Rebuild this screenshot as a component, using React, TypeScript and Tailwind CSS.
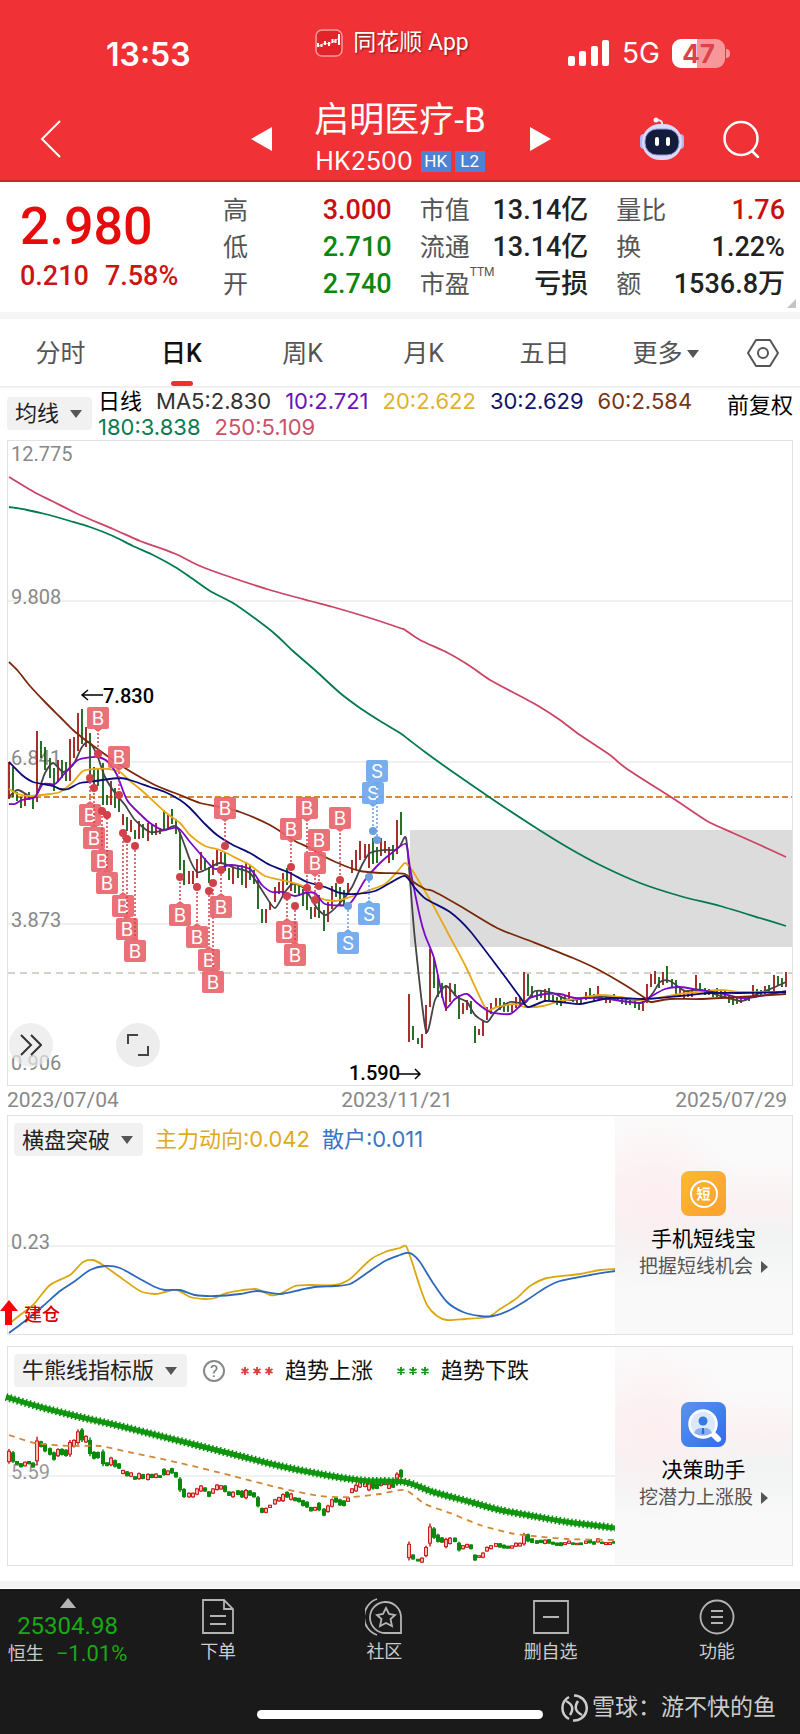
import type { ReactNode } from 'react';

type Point = [number, number];
type Candle = [number, number, number, 'r' | 'g'];

const MA250: Point[] = [[9,477],[34,492],[52,501],[80,515],[113,529],[140,541],[160,548],[178,555],[200,566],[233,578],[270,590],[310,601],[333,607],[370,618],[400,628],[405,630],[420,640],[448,653],[470,666],[490,680],[520,696],[540,707],[560,720],[580,735],[610,755],[627,769],[677,801],[707,821],[733,833],[760,845],[786,857]];
const MA180: Point[] = [[9,507],[27,510],[45,514],[70,521],[90,527],[113,536],[133,546],[155,556],[175,567],[190,577],[210,591],[233,603],[253,617],[275,634],[293,651],[317,672],[340,693],[360,708],[380,721],[400,733],[408,739],[425,752],[450,770],[495,801],[533,826],[567,847],[600,865],[640,883],[680,896],[720,906],[760,918],[786,926]];
const MA60: Point[] = [[9,662],[18,671],[30,686],[45,702],[60,717],[73,730],[88,742],[113,760],[133,773],[157,786],[180,795],[200,803],[220,807],[240,812],[270,825],[295,841],[310,848],[325,857],[345,866],[360,871],[380,873],[405,874],[412,881],[425,889],[433,891],[460,906],[497,928],[533,942],[573,958],[597,969],[625,985],[645,998],[651,1002],[670,999],[700,999],[740,997],[786,994]];
const MA30: Point[] = [[9,762],[22,775],[33,782],[53,786],[60,789],[68,789],[80,783],[95,781],[120,778],[133,781],[150,787],[165,792],[180,800],[190,808],[205,824],[217,835],[233,845],[250,853],[270,865],[290,873],[307,882],[325,887],[340,893],[355,894],[375,891],[390,883],[405,876],[415,888],[426,899],[450,912],[470,931],[500,970],[520,997],[528,1007],[545,1001],[560,1002],[580,1004],[610,998],[645,999],[680,996],[710,993],[740,993],[786,992]];
const MA20: Point[] = [[9,789],[18,794],[30,796],[50,794],[60,792],[73,782],[83,771],[95,769],[108,769],[120,772],[130,781],[140,789],[150,798],[165,812],[180,823],[190,835],[205,846],[220,850],[240,860],[250,865],[265,876],[290,882],[305,887],[320,898],[335,901],[350,897],[370,890],[385,884],[397,872],[405,863],[412,870],[420,883],[433,905],[450,937],[465,965],[478,993],[487,1010],[497,1007],[513,1004],[525,1007],[543,1006],[560,1001],[580,998],[600,995],[620,997],[645,1000],[680,994],[720,990],[740,992],[786,992]];
const MA10: Point[] = [[9,804],[15,804],[22,800],[35,797],[43,784],[55,784],[65,773],[78,760],[97,757],[108,762],[117,775],[127,800],[140,814],[150,823],[163,830],[178,828],[190,842],[203,857],[215,869],[230,865],[250,869],[262,885],[272,892],[283,892],[295,896],[305,893],[315,893],[325,904],[347,905],[355,897],[365,880],[380,863],[393,852],[406,844],[410,868],[420,917],[425,935],[434,958],[441,990],[446,1008],[455,999],[467,994],[477,1003],[490,1012],[510,1014],[520,1006],[530,998],[545,994],[560,994],[575,998],[600,998],[640,1003],[650,997],[665,989],[680,987],[700,990],[720,993],[740,998],[755,997],[786,991]];
const MA5: Point[] = [[9,797],[18,790],[35,797],[45,773],[53,763],[63,772],[73,765],[82,747],[89,742],[97,755],[105,777],[115,793],[125,805],[135,820],[150,832],[165,830],[177,827],[190,860],[197,872],[205,870],[220,863],[235,868],[250,873],[265,895],[275,908],[285,892],[293,884],[305,889],[317,908],[326,915],[340,903],[352,887],[362,865],[370,853],[385,850],[395,850],[400,846],[406,838],[410,880],[415,940],[426,1031],[435,1000],[446,986],[457,997],[467,1002],[475,1015],[487,1022],[495,1012],[510,1002],[525,1003],[535,991],[553,993],[570,1000],[600,996],[645,1000],[660,982],[670,981],[685,991],[700,990],[740,1001],[755,995],[775,987],[786,982]];

const averages: { points: Point[]; color: string }[] = [
    { points: MA5, color: '#444444' },
    { points: MA20, color: '#e8a818' },
    { points: MA10, color: '#7a08c8' },
    { points: MA30, color: '#0a0a78' },
    { points: MA60, color: '#782808' },
    { points: MA180, color: '#007850' },
    { points: MA250, color: '#cc4464' },
];

// x, high, low, direction
const candles: Candle[] = [
    [9,762,799,'r'],[13,767,797,'g'],[17,792,801,'g'],[21,797,808,'g'],[25,793,806,'r'],[29,792,800,'g'],[33,795,809,'g'],[37,731,802,'r'],[41,741,758,'g'],[45,747,770,'g'],
    [50,758,778,'g'],[54,768,791,'g'],[58,760,782,'r'],[62,760,778,'g'],[66,762,781,'g'],[70,739,781,'r'],[74,737,758,'r'],[78,713,751,'r'],[82,709,744,'g'],[86,727,747,'r'],
    [90,733,780,'g'],[94,767,788,'g'],[98,768,786,'g'],[103,763,805,'g'],[107,795,805,'g'],[111,781,805,'r'],[115,788,808,'g'],[119,797,812,'g'],[123,814,825,'r'],[127,817,831,'g'],
    [131,820,832,'r'],[135,830,839,'g'],[139,821,839,'r'],[143,824,838,'g'],[148,823,841,'r'],[152,824,835,'g'],[156,823,835,'r'],[160,828,834,'g'],[164,810,829,'g'],[168,815,828,'r'],
    [172,809,824,'g'],[176,819,834,'g'],[180,832,870,'g'],[184,860,885,'g'],[189,871,884,'r'],[193,871,884,'r'],[197,859,878,'r'],[201,852,870,'r'],[205,858,869,'g'],[209,867,883,'g'],
    [213,860,875,'r'],[217,850,866,'r'],[221,852,864,'r'],[225,852,871,'g'],[229,868,880,'g'],[233,868,884,'r'],[238,865,878,'g'],[242,865,885,'g'],[246,862,888,'r'],[250,865,880,'g'],
    [254,870,884,'g'],[258,880,909,'g'],[262,909,923,'g'],[266,909,923,'r'],[270,902,910,'r'],[275,887,902,'r'],[279,882,894,'r'],[283,873,895,'r'],[287,868,885,'g'],[291,872,891,'r'],
    [295,883,893,'g'],[299,884,896,'g'],[303,889,906,'g'],[307,893,910,'g'],[311,907,919,'g'],[315,907,917,'r'],[319,895,918,'g'],[324,910,931,'g'],[328,902,922,'r'],[332,886,909,'r'],
    [336,883,897,'g'],[340,887,905,'g'],[344,890,906,'g'],[348,883,895,'r'],[352,860,873,'r'],[356,850,870,'r'],[360,841,860,'r'],[365,844,858,'r'],[369,844,868,'r'],[373,838,864,'g'],
    [377,847,863,'g'],[381,838,856,'r'],[385,841,853,'r'],[389,847,863,'r'],[393,845,860,'g'],[397,820,854,'r'],[401,812,835,'g'],[409,994,1042,'r'],[413,1026,1040,'g'],[418,1038,1044,'g'],
    [422,1034,1048,'r'],[426,1005,1034,'r'],[430,949,1007,'r'],[434,958,988,'g'],[438,975,997,'g'],[442,983,998,'g'],[446,985,1011,'r'],[450,983,1002,'r'],[455,984,996,'g'],[459,995,1019,'g'],
    [463,1003,1014,'r'],[467,1000,1010,'r'],[471,1001,1014,'g'],[475,1026,1043,'g'],[479,1029,1035,'r'],[483,1021,1036,'r'],[487,1007,1020,'r'],[491,1003,1014,'r'],[496,998,1008,'r'],[500,998,1010,'g'],
    [504,1002,1012,'g'],[508,1005,1012,'g'],[512,1004,1012,'r'],[516,997,1008,'r'],[520,997,1007,'r'],[524,972,1005,'r'],[528,974,996,'g'],[532,986,998,'g'],[537,991,1000,'g'],[541,990,998,'g'],
    [545,989,1001,'r'],[549,988,1000,'g'],[553,995,1002,'g'],[557,997,1005,'g'],[561,996,1006,'g'],[565,996,1003,'r'],[569,992,1000,'r'],[573,997,1002,'g'],[577,998,1003,'r'],[581,997,1003,'g'],
    [586,992,1000,'r'],[590,988,999,'g'],[594,994,1002,'g'],[598,986,997,'r'],[602,995,1000,'g'],[606,996,1003,'r'],[610,996,1003,'r'],[614,994,999,'g'],[618,997,1001,'g'],[622,998,1004,'g'],
    [626,998,1005,'g'],[630,998,1005,'g'],[635,1001,1008,'g'],[639,1003,1010,'g'],[643,998,1011,'r'],[647,984,1003,'r'],[651,974,987,'r'],[655,971,984,'r'],[659,977,988,'g'],[663,972,985,'r'],
    [667,966,983,'g'],[672,979,988,'g'],[676,980,995,'g'],[680,988,997,'r'],[684,991,998,'r'],[688,990,997,'r'],[692,989,997,'r'],[696,975,990,'r'],[700,983,992,'g'],[705,988,995,'g'],
    [709,989,995,'r'],[713,990,997,'g'],[717,988,997,'g'],[721,990,997,'g'],[725,991,997,'r'],[729,996,1003,'g'],[733,998,1005,'g'],[737,998,1004,'g'],[741,998,1003,'r'],[745,997,1001,'r'],
    [749,996,1001,'g'],[753,985,997,'r'],[757,989,996,'g'],[761,990,995,'g'],[765,986,994,'r'],[769,985,992,'g'],[774,975,991,'r'],[778,976,986,'g'],[782,978,987,'g'],[786,972,987,'r'],
];

// x of the trade, y of the label, y of the dot
const buys: [number, number, number][] = [
    [98,718,754],[119,757,795],[90,815,778],[94,838,788],[102,861,811],[107,883,815],[123,906,833],[127,929,839],[135,951,846],
    [180,915,877],[197,937,887],[209,960,891],[213,982,883],[221,907,870],[225,808,846],
    [291,829,867],[307,808,888],[319,840,886],[315,863,900],[340,818,880],[287,932,896],[295,955,906],
];
const sells: [number, number, number][] = [[373,793,831],[377,771,840],[348,943,906],[369,914,877]];

const mainFlow: Point[] = [[9,1324],[20,1315],[33,1305],[50,1285],[70,1275],[83,1262],[93,1260],[103,1265],[120,1277],[140,1291],[155,1294],[165,1292],[177,1290],[190,1297],[205,1299],[215,1298],[227,1293],[255,1289],[270,1295],[280,1294],[295,1286],[310,1285],[335,1285],[350,1279],[370,1260],[385,1252],[400,1248],[406,1246],[412,1262],[420,1287],[427,1305],[437,1316],[447,1320],[465,1319],[488,1317],[500,1309],[517,1298],[530,1286],[547,1278],[580,1274],[600,1270],[615,1269]];
const retailFlow: Point[] = [[9,1333],[25,1321],[43,1306],[60,1291],[75,1281],[90,1270],[105,1266],[120,1268],[140,1279],[155,1287],[165,1290],[180,1290],[195,1295],[215,1296],[240,1294],[257,1291],[280,1294],[300,1290],[315,1287],[335,1286],[350,1284],[367,1273],[385,1261],[400,1255],[406,1253],[412,1254],[420,1262],[433,1283],[447,1302],[463,1312],[480,1316],[493,1316],[510,1310],[527,1300],[545,1288],[560,1281],[590,1275],[615,1271]];
const trendLine: Point[] = [[6,1397],[40,1407],[80,1417],[120,1426],[160,1436],[200,1446],[240,1456],[280,1466],[320,1474],[350,1479],[370,1481],[405,1482],[433,1492],[467,1501],[500,1510],[533,1516],[567,1522],[600,1526],[615,1528]];
const midLine: Point[] = [[9,1435],[35,1443],[70,1446],[100,1446],[133,1453],[180,1463],[233,1476],[280,1488],[320,1496],[350,1497],[380,1494],[405,1490],[425,1504],[450,1513],[480,1525],[510,1533],[533,1536],[567,1539],[615,1540]];

function smooth(points: Point[]) {
    let d = `M${points[0][0]} ${points[0][1]}`;
    for (let i = 0; i < points.length - 1; i++) {
        const a = points[i - 1] ?? points[i];
        const b = points[i];
        const c = points[i + 1];
        const e = points[i + 2] ?? c;
        d += `C${b[0] + (c[0] - a[0]) / 8} ${b[1] + (c[1] - a[1]) / 8} ${c[0] - (e[0] - b[0]) / 8} ${c[1] - (e[1] - b[1]) / 8} ${c[0]} ${c[1]}`;
    }
    return d;
}

function Marker({ x, label, dot, kind }: { x: number; label: number; dot: number; kind: 'B' | 'S' }) {
    const fill = kind === 'B' ? '#e8656c' : '#6ca6ee';
    const line = kind === 'B' ? '#d2404a' : '#6a9ee0';
    const side = dot > label ? 1 : -1;
    const edge = label + side * 11;
    return (
        <g>
            <line x1={x} y1={edge} x2={x} y2={dot} stroke={line} strokeWidth="1.5" strokeDasharray="2 2" />
            <circle cx={x} cy={dot} r="4" fill={line} />
            <rect x={x - 11} y={label - 11} width="22" height="22" rx="2" fill={fill} fillOpacity="0.92" />
            <path d={`M${x - 4} ${edge}L${x} ${edge + side * 3}L${x + 4} ${edge}Z`} fill={fill} />
            <text x={x} y={label + 7} fontSize="19" textAnchor="middle" fill="#fff" className="font-['Inter']">{kind}</text>
        </g>
    );
}

function PriceChart() {
    return (
        <svg viewBox="8 441 784 644" className="block w-full" role="img" aria-label="日K">
            <g stroke="#ececec" strokeWidth="1.5">
                <path d="M8 601H792M8 762H792M8 924H792" />
            </g>
            <rect x="410" y="830" width="382" height="117" fill="#dcdcdc" />
            <path d="M8 797H792" stroke="#d88a30" strokeWidth="2" strokeDasharray="6 3" />
            <path d="M8 973H792" stroke="#c8c2b8" strokeWidth="1.5" strokeDasharray="7 5" />
            <g fill="#888" fontSize="20">
                <text x="11" y="461">12.775</text>
                <text x="11" y="604">9.808</text>
                <text x="11" y="765">6.841</text>
                <text x="11" y="927">3.873</text>
                <text x="11" y="1070">0.906</text>
            </g>
            {candles.map(([x, hi, lo, dir]) => (
                <line key={x} x1={x} x2={x} y1={hi} y2={lo} stroke={dir === 'r' ? '#a01818' : '#106010'} strokeWidth="1.8" />
            ))}
            <g fill="none" strokeWidth="1.8" strokeLinejoin="round">
                {averages.map((ma) => (
                    <path key={ma.color} d={smooth(ma.points)} stroke={ma.color} />
                ))}
            </g>
            {buys.map(([x, label, dot]) => <Marker key={x} x={x} label={label} dot={dot} kind="B" />)}
            {sells.map(([x, label, dot]) => <Marker key={x} x={x} label={label} dot={dot} kind="S" />)}
            <g fontSize="20" fontWeight="500" fill="#000">
                <text x="103" y="703">7.830</text>
                <text x="349" y="1080">1.590</text>
            </g>
            <path d="M103 695H82M88 690L82 695L88 700M399 1074H420M415 1069L420 1074L415 1079" fill="none" stroke="#000" strokeWidth="1.5" />
        </svg>
    );
}

function FlowChart() {
    return (
        <svg viewBox="8 1162 607 172" className="block w-full overflow-visible" role="img" aria-label="横盘突破">
            <path d="M8 1246H615" stroke="#ececec" strokeWidth="1.5" />
            <text x="11" y="1249" fontSize="20" fill="#888">0.23</text>
            <path d={smooth(mainFlow)} fill="none" stroke="#daa80c" strokeWidth="1.8" />
            <path d={smooth(retailFlow)} fill="none" stroke="#2c68be" strokeWidth="1.8" />
            <path d="M9 1300L18 1311H12V1325H5V1311H0Z" fill="#f00" />
            <text x="24" y="1321" fontSize="18" fontWeight="500" fill="#d80000">建仓</text>
        </svg>
    );
}

function TrendChart() {
    // same prices as the main chart on a flatter scale
    const scale = (y: number) => 1428 + (y - 709) * 0.398;
    return (
        <svg viewBox="8 1393 607 172" className="block w-full overflow-visible" role="img" aria-label="牛熊线指标版">
            <path d="M8 1476H615" stroke="#ececec" strokeWidth="1.5" />
            <text x="11" y="1479" fontSize="20" fill="#999">5.59</text>
            {candles.filter(([x]) => x < 615).map(([x, hi, lo, dir]) => {
                const top = scale(hi);
                const bottom = scale(lo);
                const inset = (bottom - top) * 0.15;
                const color = dir === 'r' ? '#c81e1e' : '#0a8a0a';
                return (
                    <g key={x} stroke={color}>
                        <line x1={x} x2={x} y1={top} y2={bottom} strokeWidth="1.5" />
                        <rect x={x - 1.5} y={top + inset} width="3" height={bottom - top - inset * 2} fill={dir === 'r' ? '#fbb' : color} strokeWidth="1" />
                    </g>
                );
            })}
            <path d={smooth(midLine)} fill="none" stroke="#d08838" strokeWidth="1.8" strokeDasharray="6 5" />
            <path d={smooth(trendLine)} fill="none" stroke="#0f9a0f" strokeWidth="5" />
            <path d={smooth(trendLine)} fill="none" stroke="#0f8f0f" strokeWidth="8" strokeDasharray="1.5 2.5" />
        </svg>
    );
}

function Caret() {
    return <svg viewBox="0 0 12 8" className="pointer-events-none h-2 w-3"><path d="M0 0H12L6 8Z" fill="#555" /></svg>;
}

function Picker({ label, options }: { label: string; options: string[] }) {
    return (
        <div className="relative flex h-[33px] shrink-0 items-center rounded-sm bg-[#f1f1f1]">
            <select aria-label={label} className="h-full appearance-none bg-transparent pr-8 pl-2 text-[22px] leading-8 text-[#222] outline-none">
                {options.map((o) => <option key={o}>{o}</option>)}
            </select>
            <span className="pointer-events-none absolute right-2.5 flex"><Caret /></span>
        </div>
    );
}

function Promo({ icon, title, text }: { icon: ReactNode; title: string; text: string }) {
    return (
        <a href="#" className="flex w-[177px] shrink-0 flex-col items-center bg-[radial-gradient(circle_at_22%_38%,#fdeef0,transparent_45%),linear-gradient(180deg,#fafafa_20%,#faf1f2_42%,#f1f3f3_55%,#f9f9f9_80%)] pt-[55px]">
            {icon}
            <span className="mt-[7px] text-[21px] leading-8 text-black">{title}</span>
            <span className="flex items-center gap-2 text-[19px] leading-6 text-[#555]">
                {text}
                <svg viewBox="0 0 7 12" className="h-3 w-[7px]"><path d="M0 0L7 6L0 12Z" fill="#555" /></svg>
            </span>
        </a>
    );
}

function Stat({ name, value, color, sup }: { name: string; value: string; color: string; sup?: string }) {
    return (
        <div className="flex h-[37px] items-center justify-between">
            <dt className="flex text-[25px] text-[#555]">
                {name}
                {sup && <sup className="top-0 self-start text-xs leading-3">{sup}</sup>}
            </dt>
            <dd className={`text-[27px] font-medium ${color}`}>{value}</dd>
        </div>
    );
}

function StatusBar() {
    return (
        <div className="grid grid-cols-3 items-start pt-[25px]">
            <div className="pt-2.5 pl-[106px] font-['Inter'] text-[32px] leading-10 font-semibold">13:53</div>
            <div className="flex items-center justify-center gap-2.5 pr-4">
                <svg viewBox="0 0 28 28" className="size-7">
                    <rect x="1" y="1" width="26" height="26" rx="6" fill="#e0242a" stroke="#f59a9c" strokeWidth="1.5" />
                    <path d="M3 18V14M6.500 18V15M10 16V12M14 17V13M17.500 14V10M20.500 14V10M24 16V5" stroke="#fff" strokeWidth="2" />
                    <path d="M4 17L10 14L14 15L20 12L24 9" stroke="#fff" strokeWidth="0.8" fill="none" />
                </svg>
                <span className="text-[23px] leading-9 [text-shadow:1px_1px_2px_rgba(60,0,0,0.6)]">同花顺 App</span>
            </div>
            <div className="flex items-center justify-end pt-2 pr-[70px]">
                <svg viewBox="0 0 42 26" className="h-[26px] w-[42px]" fill="#fff">
                    <rect x="0" y="16" width="7" height="10" rx="2" />
                    <rect x="11" y="11" width="7" height="15" rx="2" />
                    <rect x="23" y="6" width="7" height="20" rx="2" />
                    <rect x="34" y="0" width="7" height="26" rx="2" />
                </svg>
                <span className="ml-3 font-['Inter'] text-[28px] leading-10">5G</span>
                <span className="ml-3 flex h-[29px] w-[53px] items-center justify-center rounded-[9px] bg-[linear-gradient(90deg,#fff_47%,#f8979a_47%)] font-['Inter'] text-[26px] font-bold text-[#dc4248]">47</span>
                <span className="ml-px h-[9px] w-1 rounded-r-full bg-[#f8979a]" />
            </div>
        </div>
    );
}

function TitleBar() {
    return (
        <div className="grid grid-cols-[1fr_auto_1fr] items-center">
            <div className="flex items-center justify-between pr-[42px] pl-10">
                <button aria-label="返回">
                    <svg viewBox="0 0 22 38" className="h-[38px] w-[22px]"><path d="M20 1L2 19L20 37" fill="none" stroke="#fff" strokeWidth="2" /></svg>
                </button>
                <button aria-label="上一只">
                    <svg viewBox="0 0 21 24" className="h-6 w-[21px]"><path d="M21 0V24L0 12Z" fill="#fff" /></svg>
                </button>
            </div>
            <div className="flex flex-col items-center">
                <h1 className="text-[35px] leading-[44px]">启明医疗-B</h1>
                <div className="flex items-center gap-1 leading-9">
                    <span className="mr-1 font-['Inter'] text-[25px] leading-9">HK2500</span>
                    <span className="flex h-[21px] w-[30px] items-center justify-center bg-[#4f82d2] text-[17px]">HK</span>
                    <span className="flex h-[21px] w-[30px] items-center justify-center bg-[#4f82d2] text-[17px]">L2</span>
                </div>
            </div>
            <div className="flex items-center justify-between pr-10 pl-[44px]">
                <button aria-label="下一只">
                    <svg viewBox="0 0 21 24" className="h-6 w-[21px]"><path d="M0 0V24L21 12Z" fill="#fff" /></svg>
                </button>
                <div className="flex items-center gap-[37px]">
                    <button aria-label="智能助手">
                        <svg viewBox="0 0 46 44" className="h-[44px] w-[46px]">
                            <path d="M23 8Q24 3 18 3" fill="none" stroke="#e6e2fa" strokeWidth="2" />
                            <circle cx="17" cy="3" r="2.500" fill="#f4f2ff" />
                            <rect x="1" y="17" width="8" height="15" rx="4" fill="#b4b6ee" />
                            <rect x="37" y="17" width="8" height="15" rx="4" fill="#b4b6ee" />
                            <rect x="3" y="7" width="40" height="36" rx="18" fill="#dcdaf8" />
                            <rect x="6" y="12" width="34" height="26" rx="12" fill="#141c3c" stroke="#8c96dc" />
                            <rect x="16" y="20" width="4" height="9" rx="2" fill="#fff" />
                            <rect x="27" y="20" width="4" height="9" rx="2" fill="#fff" />
                        </svg>
                    </button>
                    <button aria-label="搜索">
                        <svg viewBox="0 0 38 38" className="size-[38px]" fill="none" stroke="#fff" strokeWidth="2.500">
                            <circle cx="19" cy="18.500" r="16.500" />
                            <path d="M30 31L36 37" strokeLinecap="round" />
                        </svg>
                    </button>
                </div>
            </div>
        </div>
    );
}

const tabs = ['分时', '日K', '周K', '月K', '五日'];

const legend = [
    { text: 'MA5:2.830', color: 'text-[#333]' },
    { text: '10:2.721', color: 'text-[#7010b8]' },
    { text: '20:2.622', color: 'text-[#e2b030]' },
    { text: '30:2.629', color: 'text-[#12126c]' },
    { text: '60:2.584', color: 'text-[#7a3410]' },
    { text: '180:3.838', color: 'text-[#0c7a50]' },
    { text: '250:5.109', color: 'text-[#cc5068]' },
];

const actions: { name: string; icon: ReactNode }[] = [
    { name: '下单', icon: <path d="M4 2H25L34 11V35H4ZM25 2V11H34M11 18H27M11 26H27" /> },
    { name: '社区', icon: <><path d="M36 35V19A15.500 15.500 0 1 0 21 35ZM12 1A19 19 0 0 0 12 37" /><path d="M21 10L24 16L30 17L25.500 21L27 28L21 25L15 28L16.500 21L12 17L18 16Z" /></> },
    { name: '删自选', icon: <path d="M2 3H36V35H2ZM11 19H27" /> },
    { name: '功能', icon: <><circle cx="19" cy="19" r="16.500" /><path d="M13 13H25M13 19H25M13 25H25" /></> },
];

export default function App() {
    return (
        <div className="bg-white font-['Roboto','Noto_Sans_CJK_SC',sans-serif] text-[#222]">
            <header className="h-[182px] border-b-2 border-[#c22c30] bg-[#f03136] text-white">
                <StatusBar />
                <div className="mt-6"><TitleBar /></div>
            </header>

            <section className="relative flex h-[130px] pt-2.5 pr-[15px] pl-5">
                <div className="w-[203px] shrink-0">
                    <div className="pt-1.5 text-[52px] leading-[58px] font-medium text-[#e60c0c]">2.980</div>
                    <div className="flex gap-4 pt-1 text-[27px] leading-8 font-medium text-[#cc1414]">
                        <span>0.210</span>
                        <span>7.58%</span>
                    </div>
                </div>
                <dl className="grid flex-1 grid-cols-3 content-start gap-x-7">
                    <Stat name="高" value="3.000" color="text-[#c81010]" />
                    <Stat name="市值" value="13.14亿" color="text-[#222]" />
                    <Stat name="量比" value="1.76" color="text-[#c81010]" />
                    <Stat name="低" value="2.710" color="text-[#0c860c]" />
                    <Stat name="流通" value="13.14亿" color="text-[#222]" />
                    <Stat name="换" value="1.22%" color="text-[#222]" />
                    <Stat name="开" value="2.740" color="text-[#0c860c]" />
                    <Stat name="市盈" sup="TTM" value="亏损" color="text-[#222]" />
                    <Stat name="额" value="1536.8万" color="text-[#222]" />
                </dl>
                <svg viewBox="0 0 9 9" className="absolute right-1 bottom-1 size-[9px]"><path d="M9 0V9H0Z" fill="#c4c4c4" /></svg>
            </section>
            <div className="h-[7px] bg-[#f5f5f5]" />

            <nav className="flex h-[69px] items-stretch border-b-2 border-[#f0f0f0] text-[25px] text-[#555]">
                {tabs.map((t) => (
                    <button key={t} className={`relative flex-1 pt-0.5 ${t === '日K' ? 'font-medium text-[#111]' : ''}`}>
                        {t}
                        {t === '日K' && <span className="absolute inset-x-0 bottom-0 mx-auto h-[5px] w-[22px] rounded-full bg-[#ee3034]" />}
                    </button>
                ))}
                <button className="flex flex-1 items-center justify-center gap-1 pt-0.5">更多<Caret /></button>
                <button aria-label="设置" className="flex w-[74px] items-center justify-center">
                    <svg viewBox="0 0 32 30" className="h-[30px] w-8" fill="none" stroke="#555" strokeWidth="2">
                        <path d="M9 2H23L31 15L23 28H9L1 15Z" strokeLinejoin="round" />
                        <circle cx="16" cy="15" r="5" />
                    </svg>
                </button>
            </nav>

            <div className="flex h-[52px] items-start px-[7px] text-[22px]">
                <div className="flex pt-[9px]"><Picker label="指标" options={['均线']} /></div>
                <div className="flex flex-1 flex-wrap gap-x-3.5 pl-1.5 font-['Inter','Noto_Sans_CJK_SC',sans-serif] leading-[26px]">
                    <span className="text-black">日线</span>
                    {legend.map((l) => <span key={l.text} className={l.color}>{l.text}</span>)}
                </div>
                <button className="shrink-0 pt-1 leading-7 text-black">前复权</button>
            </div>

            <main className="px-[7px]">
                <div className="relative border border-[#e2e2e2]">
                    <PriceChart />
                    <button aria-label="展开" className="absolute bottom-[18px] left-[1px] flex size-11 items-center justify-center rounded-full bg-[#e8e8e8]/70">
                        <svg viewBox="0 0 22 22" className="size-[22px]" fill="none" stroke="#333" strokeWidth="2"><path d="M1 1L11 11L1 21M11 1L21 11L11 21" /></svg>
                    </button>
                    <button aria-label="全屏" className="absolute bottom-[18px] left-[108px] flex size-11 items-center justify-center rounded-full bg-[#e8e8e8]/80">
                        <svg viewBox="0 0 24 24" className="size-6" fill="none" stroke="#444" strokeWidth="2"><path d="M2 11V2H12M22 13V22H12" /></svg>
                    </button>
                </div>
                <div className="flex h-[29px] items-center justify-between text-[21px] text-[#888]">
                    <span>2023/07/04</span>
                    <span>2023/11/21</span>
                    <span className="pr-1.5">2025/07/29</span>
                </div>

                <section className="flex border border-[#e2e2e2]">
                    <div className="min-w-0 flex-1">
                        <div className="flex h-[46px] items-center gap-3 pb-1.5 pt-[7px] pl-1.5 font-['Inter','Noto_Sans_CJK_SC',sans-serif] text-[22px]">
                            <Picker label="副图指标一" options={['横盘突破']} />
                            <span className="text-[#e2a81c]">主力动向:0.042</span>
                            <span className="text-[#3c74c4]">散户:0.011</span>
                        </div>
                        <FlowChart />
                    </div>
                    <Promo
                        title="手机短线宝"
                        text="把握短线机会"
                        icon={
                            <span className="flex size-[45px] items-center justify-center rounded-lg bg-linear-to-br from-[#fcb934] to-[#fb9f2e] text-white">
                                <span className="flex size-7 items-center justify-center rounded-full border-2 border-white text-sm font-bold">短</span>
                            </span>
                        }
                    />
                </section>

                <section className="mt-[11px] flex border border-[#e2e2e2]">
                    <div className="min-w-0 flex-1">
                        <div className="flex h-[46px] items-center pb-1.5 pt-[7px] pl-1.5 text-[22px] text-[#111]">
                            <Picker label="副图指标二" options={['牛熊线指标版']} />
                            <button aria-label="说明" className="ml-4 flex size-[22px] shrink-0 items-center justify-center rounded-full border-2 border-[#888] text-[17px] leading-4 text-[#777]">?</button>
                            <svg viewBox="0 0 32 8" className="mr-3 ml-4 h-2 w-8" stroke="#dc3c3c" strokeWidth="1.800">
                                <path d="M4 0V8M0.500 2L7.500 6M0.500 6L7.500 2M16 0V8M12.500 2L19.500 6M12.500 6L19.500 2M28 0V8M24.500 2L31.500 6M24.500 6L31.500 2" />
                            </svg>
                            <span>趋势上涨</span>
                            <svg viewBox="0 0 32 8" className="mr-3 ml-6 h-2 w-8" stroke="#109610" strokeWidth="1.800">
                                <path d="M4 0V8M0.500 2L7.500 6M0.500 6L7.500 2M16 0V8M12.500 2L19.500 6M12.500 6L19.500 2M28 0V8M24.500 2L31.500 6M24.500 6L31.500 2" />
                            </svg>
                            <span>趋势下跌</span>
                        </div>
                        <TrendChart />
                    </div>
                    <Promo
                        title="决策助手"
                        text="挖潜力上涨股"
                        icon={
                            <svg viewBox="0 0 45 45" className="size-[45px] rounded-lg bg-linear-to-br from-[#5c94e8] to-[#2e6cf0]">
                                <path d="M32 32L37 37" stroke="#fff" strokeWidth="6" strokeLinecap="round" />
                                <circle cx="22" cy="22" r="13.500" fill="#dce8fc" stroke="#fff" strokeWidth="2.500" />
                                <circle cx="22" cy="19" r="4.500" fill="#3878e4" />
                                <path d="M13 31Q15 26 20 26L22 31L24 26Q29 26 31 31Q22 36 13 31Z" fill="#8cb0f0" />
                                <path d="M22 26V32" stroke="#2c6ce0" strokeWidth="2.500" />
                            </svg>
                        }
                    />
                </section>
            </main>

            <div className="mt-[15px] mb-px h-[7px] bg-[#f3f3f3]" />

            <footer className="h-[145px] bg-[#1a1a1a] text-[#ccc]">
                <div className="flex h-[85px]">
                    <button className="flex w-[135px] shrink-0 flex-col items-center pt-[9px]">
                        <svg viewBox="0 0 16 10" className="h-2.5 w-4"><path d="M8 0L16 10H0Z" fill="#b4b4b4" /></svg>
                        <span className="mt-0.5 text-2xl leading-8 text-[#18a818]">25304.98</span>
                        <span className="flex items-center gap-3 text-[18px] leading-6">恒生<span className="text-[22px] text-[#18a818]">−1.01%</span></span>
                    </button>
                    <div className="flex flex-1">
                        {actions.map((a) => (
                            <button key={a.name} className="flex flex-1 flex-col items-center pt-[9px] text-[18px] leading-7">
                                <svg viewBox="0 0 38 38" className="mb-0.5 size-[38px]" fill="none" stroke="#b4b4b4" strokeWidth="1.800">{a.icon}</svg>
                                {a.name}
                            </button>
                        ))}
                    </div>
                </div>
                <div className="grid grid-cols-[1fr_286px_1fr] items-center pt-[18px]">
                    <div />
                    <div className="mt-3 h-[9px] rounded-full bg-white" />
                    <div className="flex items-center gap-1 pl-[17px] text-[23px] leading-8 whitespace-nowrap">
                        <svg viewBox="0 0 28 28" className="size-7" fill="none" stroke="#ccc" strokeWidth="2.500">
                            <path d="M9 3A12.500 12.500 0 0 0 9 25M13 26.500A12.500 12.500 0 0 0 19 2.500M14 1.500Q17 1.500 19 2.500" />
                            <path d="M6 7Q16 12 10 21M22 21Q12 16 18 7" />
                        </svg>
                        <span>雪球：游不快的鱼</span>
                    </div>
                </div>
            </footer>
        </div>
    );
}
